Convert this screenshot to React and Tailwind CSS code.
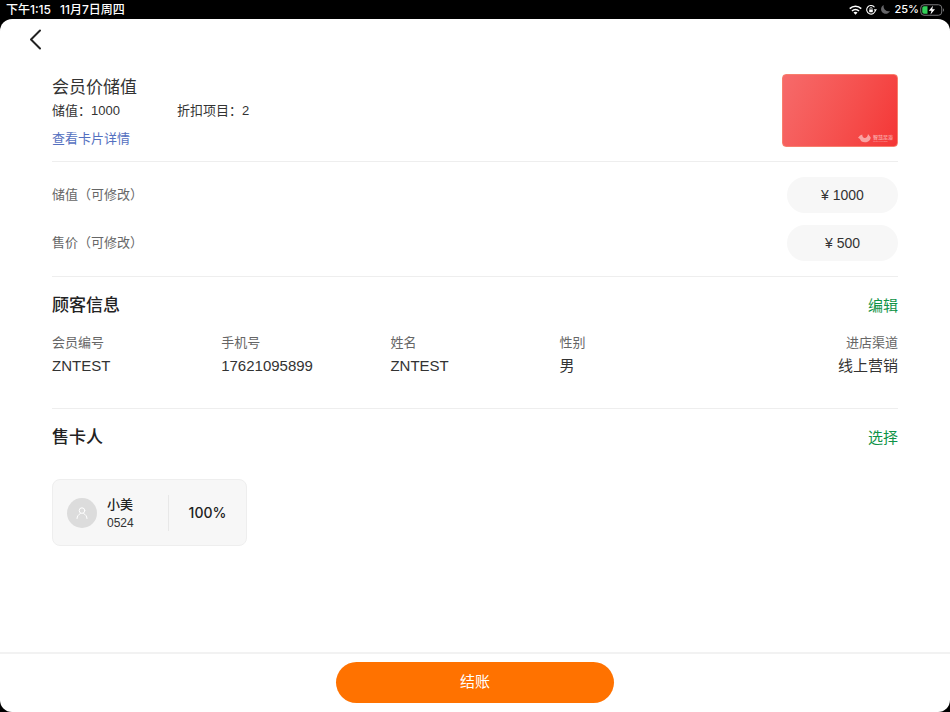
const sans = "font-['Liberation_Sans','Noto_Sans_CJK_SC',sans-serif]"
const inter = "font-['Inter','Noto_Sans_CJK_SC',sans-serif]"

const customer = [
  { label: '会员编号', value: 'ZNTEST' },
  { label: '手机号', value: '17621095899' },
  { label: '姓名', value: 'ZNTEST' },
  { label: '性别', value: '男' },
  { label: '进店渠道', value: '线上营销' },
]

function WifiIcon() {
  return (
    <svg width="13" height="10" viewBox="0 0 26 20" fill="none" stroke="#fff" strokeWidth="3.2">
      <path d="M1.5 7.2C8 .8 18 .8 24.5 7.2" />
      <path d="M6 12C10 8.2 16 8.2 20 12" />
      <path d="M13 19.5L9 15.2C11.3 13.2 14.7 13.2 17 15.2Z" fill="#fff" stroke="none" />
    </svg>
  )
}

function RotationLockIcon() {
  return (
    <svg width="11" height="10" viewBox="0 0 22 20" fill="none" stroke="#fff" strokeWidth="2.2">
      <path d="M17 4.6A8.6 8.6 0 1 0 18.6 10.5" />
      <path d="M15.5 8.5h6.5l-3.200 4.500z" fill="#fff" stroke="none" />
      <path d="M7.800 9V7.300a2.200 2.200 0 0 1 4.400 0V9" strokeWidth="1.500" />
      <rect x="6.400" y="8.800" width="7.200" height="5.600" rx="1" fill="#fff" stroke="none" />
    </svg>
  )
}

function MoonIcon() {
  return (
    <svg width="9" height="9" viewBox="0 0 18 18" fill="#666669">
      <path d="M5.500 0C0 2.500-1.500 9.500 2 14C6 19.200 15 19 18 12C14.500 13.200 11 12.500 8.500 10.200C5.500 7.500 4.500 3.500 5.500 0Z" />
    </svg>
  )
}

function BatteryIcon() {
  return (
    <svg width="25" height="12" viewBox="0 0 50 24">
      <rect x="1.500" y="1.500" width="42" height="21" rx="6.500" fill="none" stroke="#77777a" strokeWidth="2" />
      <path d="M46 8.500c2.600.8 2.600 6.200 0 7z" fill="#77777a" />
      <path d="M8 4.500h7v15H8a3.500 3.500 0 0 1-3.500-3.500V8A3.500 3.500 0 0 1 8 4.500z" fill="#32d158" />
      <path d="M26 3.500l-8.500 10h5.500l-2 7.500 9-10.500h-5.500z" fill="#fff" />
    </svg>
  )
}

function StatusBar() {
  return (
    <div className={`flex h-[19px] shrink-0 items-center justify-between pr-[5px] pl-[6px] text-[12px] leading-[19px] font-medium text-white ${inter}`}>
      <div className="flex gap-[9px]">
        <span>下午1:15</span>
        <span>11月7日周四</span>
      </div>
      <div className="flex items-center gap-1">
        <WifiIcon />
        <RotationLockIcon />
        <MoonIcon />
        <div className="flex items-center gap-px text-[11px]">
          <span>25%</span>
          <BatteryIcon />
        </div>
      </div>
    </div>
  )
}

function MemberCard() {
  return (
    <div className="flex h-[73px] w-[116px] items-end justify-end rounded border border-[#f87e6c] bg-linear-115 from-[#f66a6a] to-[#f43535] pr-1 pb-[3px] text-white/50">
      <svg width="13" height="10" viewBox="0 0 26 20" fill="currentColor">
        <path d="M4 5l4.500-2c0 4.500 2 7 5 7s6-2.500 6.500-8L25.500 9C25 15 20 18.500 14 18.500 8.500 18.500 5 16 4 12L0 9.500z" />
      </svg>
      <div className="ml-[2px] flex flex-col">
        <span className="text-[5px] leading-[6px] font-bold">智慧足浴</span>
        <span className="text-[2px] leading-[3px]">Smart Foot Bath</span>
      </div>
    </div>
  )
}

function AmountRow({ id, label, value }) {
  return (
    <div className="flex items-center justify-between">
      <label htmlFor={id} className="text-[13px] text-[#666]">{label}</label>
      <input
        id={id}
        type="text"
        defaultValue={value}
        className="h-9 w-[111px] rounded-full bg-[#f7f7f7] text-center text-[14px] text-[#333] outline-none"
      />
    </div>
  )
}

function SectionHeader({ title, action }) {
  return (
    <div className="flex items-center justify-between leading-6">
      <h2 className="text-[17px] font-medium text-[#222]">{title}</h2>
      <button type="button" className="text-[15px] text-[#0f9347]">{action}</button>
    </div>
  )
}

export default function App() {
  return (
    <div className={`flex min-h-screen flex-col bg-black ${sans}`}>
      <StatusBar />
      <div className="flex grow flex-col overflow-hidden rounded-xl bg-white text-[#333]">
        <header className="px-[29px] pt-[9px]">
          <button type="button" aria-label="返回" className="block">
            <svg width="13" height="22" viewBox="0 0 13 22" fill="none" stroke="#222" strokeWidth="2" strokeLinecap="round" strokeLinejoin="round">
              <path d="M11 2.500L2 11.500l9 9" />
            </svg>
          </button>
        </header>

        <main className="grow px-[52px]">
          <section className="flex items-start justify-between border-b border-[#eee] pt-6 pb-[11px]">
            <div className="text-[13px] leading-[18px]">
              <h1 className="text-[17px] leading-7">会员价储值</h1>
              <div className="flex">
                <p className="w-[125px]">储值：1000</p>
                <p>折扣项目：2</p>
              </div>
              <a href="#card" className="mt-2 block leading-[22px] text-[#5470c0]">查看卡片详情</a>
            </div>
            <MemberCard />
          </section>

          <section className="flex flex-col gap-3 border-b border-[#eee] py-[15px]">
            <AmountRow id="stored" label="储值（可修改）" value="¥ 1000" />
            <AmountRow id="price" label="售价（可修改）" value="¥ 500" />
          </section>

          <section className="border-b border-[#eee] pt-[17px] pb-[30px]">
            <SectionHeader title="顾客信息" action="编辑" />
            <dl className="mt-[14px] grid grid-cols-5">
              {customer.map((item) => (
                <div key={item.label} className="last:text-right">
                  <dt className="text-[13px] leading-[22px] text-[#666]">{item.label}</dt>
                  <dd className="text-[15px] leading-6">{item.value}</dd>
                </div>
              ))}
            </dl>
          </section>

          <section className="pt-[17px]">
            <SectionHeader title="售卡人" action="选择" />
            <div className="mt-[29px] flex h-[67px] w-[195px] items-center rounded-lg border border-[#eee] bg-[#f7f7f7]">
              <div className="ml-[14px] flex size-[30px] items-center justify-center rounded-full bg-[#dcdcdc]">
                <svg width="12" height="12" viewBox="0 0 12 12" fill="none" stroke="#fff" strokeWidth="1" strokeLinecap="round">
                  <circle cx="6" cy="3.600" r="2.800" />
                  <path d="M1 11.500c.2-2.400 1.400-4 3.300-4.900M11 11.500c-.2-2.400-1.400-4-3.300-4.900" />
                </svg>
              </div>
              <div className="ml-[10px] w-[61px] pt-[2px]">
                <p className="text-[13px] leading-[18px] font-medium text-[#222]">小美</p>
                <p className="text-[12px] leading-[18px]">0524</p>
              </div>
              <div className={`flex h-9 grow items-center justify-center border-l border-[#e8e8e8] text-[14px] font-medium text-[#222] ${inter}`}>
                100%
              </div>
            </div>
          </section>
        </main>

        <footer className="flex justify-center border-t-2 border-[#f2f2f2] pt-2 pb-[9px]">
          <button type="button" className="h-[41px] w-[278px] rounded-full bg-[#ff7200] text-[15px] text-white">
            结账
          </button>
        </footer>
      </div>
    </div>
  )
}
